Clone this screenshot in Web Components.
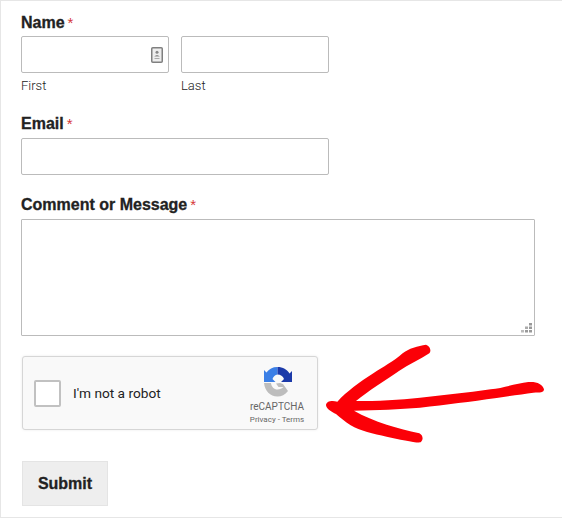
<!DOCTYPE html>
<html>
<head>
<meta charset="utf-8">
<style>
  html, body { margin: 0; padding: 0; background: #fff; }
</style>
</head>
<body>
<contact-form>
  <form-field label="Name" required style="--label-gap:4px">
    <div class="pair" style="display:flex;gap:12px">
      <text-box caption="First" width="148" contact></text-box>
      <text-box caption="Last" width="148"></text-box>
    </div>
  </form-field>
  <form-field label="Email" required style="margin-top:21px">
    <text-box width="308"></text-box>
  </form-field>
  <form-field label="Comment or Message" required style="margin-top:21px">
    <message-box></message-box>
  </form-field>
  <recaptcha-box></recaptcha-box>
  <submit-button>Submit</submit-button>
  <red-arrow></red-arrow>
</contact-form>

<script>
class ContactForm extends HTMLElement {
  constructor() {
    super();
    this.attachShadow({ mode: 'open' });
  }
  connectedCallback() {
    this.shadowRoot.innerHTML = `
    <style>
      :host{
        display: block;
        position: relative;
        box-sizing: border-box;
        width: 562px;
        height: 518px;
        padding: 13px 0 0 20px;
        border-top: 1px solid #e6e6e6;
        border-left: 1px solid #e6e6e6;
        border-bottom: 1px solid #e6e6e6;
        margin: 0;
        font-family: Roboto, "Liberation Sans", sans-serif;
        color: #222;
      }
    </style>
    <slot></slot>`;
  }
}

class FormField extends HTMLElement {
  constructor() {
    super();
    this.attachShadow({ mode: 'open' });
  }
  connectedCallback() {
    let label = this.getAttribute('label');
    this.shadowRoot.innerHTML = `
    <style>
      :host{
        display: block;
      }
      .label{
        font-family: "Liberation Sans", Arial, sans-serif;
        font-size: 16px;
        font-weight: 700;
        line-height: 18px;
        color: #222;
        margin-bottom: var(--label-gap, 5px);
        -webkit-text-stroke: 0.3px #222;
      }
      .req{
        color: #d63638;
        font-size: 15px;
        font-weight: 400;
        margin-left: 3px;
        -webkit-text-stroke: 0;
      }
    </style>
    <div class="label">${label}<span class="req">*</span></div>
    <slot></slot>`;
  }
}

class TextBox extends HTMLElement {
  constructor() {
    super();
    this.attachShadow({ mode: 'open' });
  }
  connectedCallback() {
    let caption = this.getAttribute('caption');
    let width = this.getAttribute('width');
    let contact = this.hasAttribute('contact');
    this.shadowRoot.innerHTML = `
    <style>
      :host{
        display: block;
        width: ${width}px;
      }
      .field{
        box-sizing: border-box;
        height: 37px;
        border: 1px solid #bbb;
        border-radius: 2px;
        background: #fff;
        display: flex;
        align-items: center;
        justify-content: flex-end;
        padding-right: 5px;
      }
      .caption{
        font-family: Roboto, "Liberation Sans", sans-serif;
        font-size: 13px;
        font-weight: 300;
        line-height: 16px;
        color: #222;
        margin-top: 5px;
      }
      svg{ display: block; }
    </style>
    <div class="field">
      ${contact ? `<svg width="12" height="16" viewBox="0 0 12 16">
        <rect x="0.75" y="0.75" width="10.5" height="14.5" rx="1" fill="#eee" stroke="#808080" stroke-width="1.5"/>
        <circle cx="6" cy="5.2" r="1.5" fill="#888"/>
        <path d="M3.2 9.5 Q6 6.5 8.8 9.5 Z" fill="#888"/>
        <path d="M3.5 11.5h5" stroke="#aaa" stroke-width="1"/>
      </svg>` : ''}
    </div>
    ${caption ? `<div class="caption">${caption}</div>` : ''}`;
  }
}

class MessageBox extends HTMLElement {
  constructor() {
    super();
    this.attachShadow({ mode: 'open' });
  }
  connectedCallback() {
    this.shadowRoot.innerHTML = `
    <style>
      :host{
        display: block;
        box-sizing: border-box;
        width: 514px;
        height: 117px;
        border: 1px solid #bbb;
        border-radius: 1px;
        background: #fff;
        position: relative;
      }
      svg{
        position: absolute;
        right: 2px;
        bottom: 2px;
      }
    </style>
    <svg width="11" height="10" viewBox="0 0 11 10" fill="#999">
      <rect x="8" y="0" width="3" height="2.5"/>
      <rect x="4" y="3.5" width="3" height="2.5" fill="#aaa"/>
      <rect x="8" y="3.5" width="3" height="2.5"/>
      <rect x="0" y="7" width="3" height="2.5" fill="#bbb"/>
      <rect x="4" y="7" width="3" height="2.5"/>
      <rect x="8" y="7" width="3" height="2.5"/>
    </svg>`;
  }
}

class RecaptchaBox extends HTMLElement {
  constructor() {
    super();
    this.attachShadow({ mode: 'open' });
  }
  connectedCallback() {
    this.shadowRoot.innerHTML = `
    <style>
      :host{
        display: flex;
        align-items: center;
        box-sizing: border-box;
        width: 296px;
        height: 74px;
        margin: 20px 0 0 1px;
        background: #f9f9f9;
        border: 1px solid #d6d6d6;
        border-radius: 3px;
        box-shadow: 0 0 3px rgba(0,0,0,.08);
        font-family: Roboto, "Liberation Sans", sans-serif;
        padding: 0 13px 0 11px;
      }
      .check{
        box-sizing: border-box;
        width: 27px;
        height: 27px;
        background: #fff;
        border: 2px solid #c1c1c1;
        border-radius: 2px;
        flex: none;
      }
      .text{
        margin-left: 12px;
        font-size: 13.7px;
        color: #222;
        flex: 1;
      }
      .brand{
        display: flex;
        flex-direction: column;
        align-items: center;
        color: #666;
        width: 54px;
        padding-top: 4px;
      }
      .brand svg{ display: block; }
      .name{
        font-size: 10px;
        line-height: 11px;
        margin-top: 4px;
      }
      .links{
        font-size: 8px;
        line-height: 10px;
        margin-top: 3px;
        white-space: nowrap;
      }
    </style>
    <div class="check"></div>
    <div class="text">I'm not a robot</div>
    <div class="brand">
      <svg width="31" height="31" viewBox="0 0 31 31">
        <path d="M15.5 1 C10.5 1 7 3 4.5 6.5 L2 4 L2 16 L13.5 16 L10.5 13 C11.5 10.5 13 9 15.5 8.5 Z" fill="#3b7fe6"/>
        <path d="M15.5 1 C21 1 25 3.5 27.5 7.5 L30 5 L30 16 L19 16 L22 13 C21 10 18.5 8.5 15.5 8.5 Z" fill="#1c3aa9"/>
        <path d="M2 17 L9 17 C9.5 21 12 23.5 15.5 23.5 C18 23.5 20 22.5 21.5 21 L16.5 21 L14 17.5 L18 17 L21 18 L26 25 C23 29 19.5 30.5 15.5 30.5 C8 30.5 3 25 2 17 Z" fill="#bdbdbd"/>
      </svg>
      <div class="name">reCAPTCHA</div>
      <div class="links">Privacy - Terms</div>
    </div>`;
  }
}

class SubmitButton extends HTMLElement {
  constructor() {
    super();
    this.attachShadow({ mode: 'open' });
  }
  connectedCallback() {
    this.shadowRoot.innerHTML = `
    <style>
      :host{
        display: flex;
        align-items: center;
        justify-content: center;
        box-sizing: border-box;
        width: 86px;
        height: 45px;
        margin: 31px 0 0 1px;
        background: #eee;
        border: 1px solid #e4e4e4;
        font-family: "Liberation Sans", Arial, sans-serif;
        font-size: 16px;
        font-weight: 700;
        color: #222;
        -webkit-text-stroke: 0.3px #222;
      }
    </style>
    <slot></slot>`;
  }
}

class RedArrow extends HTMLElement {
  constructor() {
    super();
    this.attachShadow({ mode: 'open' });
  }
  connectedCallback() {
    this.shadowRoot.innerHTML = `
    <style>
      :host{
        display: block;
        position: absolute;
        left: 319px;
        top: 319px;
        width: 242px;
        height: 130px;
      }
      svg{ display: block; }
    </style>
    <svg width="242" height="130" viewBox="0 0 726 390">
      <path fill="#fb0007" d="M318 74 C330 78 335 92 328 100
        C300 118 265 135 238 152 C195 182 145 212 108 243
        C170 243 240 240 300 233 C370 226 440 218 512 208
        C550 204 590 190 625 186 C650 184 668 192 672 208
        C672 218 660 218 640 218 C610 222 570 228 530 234
        C450 245 380 254 300 263 C240 268 170 270 102 272
        C130 288 165 302 200 314 C235 325 265 332 298 340
        C308 345 312 358 302 367 C290 370 240 358 200 350
        C160 342 120 332 92 316 C75 305 60 292 48 282
        C35 276 20 268 18 256 C18 244 35 240 52 245
        C80 215 120 185 160 160 C190 140 220 125 248 100
        C265 85 295 78 318 74 Z"/>
    </svg>`;
  }
}

customElements.define('contact-form', ContactForm);
customElements.define('form-field', FormField);
customElements.define('text-box', TextBox);
customElements.define('message-box', MessageBox);
customElements.define('recaptcha-box', RecaptchaBox);
customElements.define('submit-button', SubmitButton);
customElements.define('red-arrow', RedArrow);
</script>
</body>
</html>
